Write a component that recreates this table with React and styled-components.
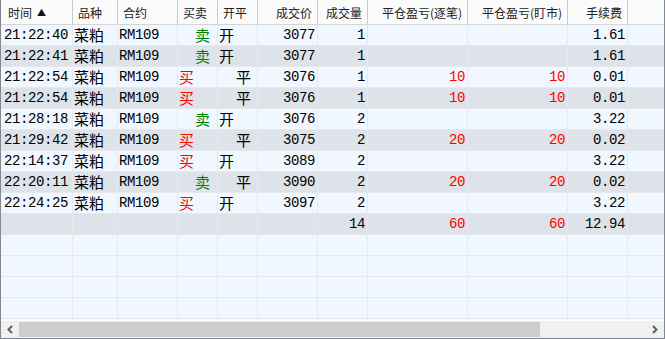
import React from "react";
import styled, { createGlobalStyle } from "styled-components";

const GlobalStyle = createGlobalStyle`
  html, body {
    margin: 0;
    padding: 0;
    background: #ffffff;
  }
`;

const columns = [
  { key: "time", title: "时间", width: 72, align: "left", sort: true },
  { key: "name", title: "品种", width: 45, align: "left" },
  { key: "code", title: "合约", width: 60, align: "left" },
  { key: "side", title: "买卖", width: 40, align: "left" },
  { key: "open", title: "开平", width: 40, align: "left" },
  { key: "price", title: "成交价", width: 60, align: "right" },
  { key: "qty", title: "成交量", width: 50, align: "right" },
  { key: "pnl", title: "平仓盈亏(逐笔)", width: 100, align: "right" },
  { key: "pnlMark", title: "平仓盈亏(盯市)", width: 100, align: "right" },
  { key: "fee", title: "手续费", width: 60, align: "right" },
];

const trades = [
  ["21:22:40", "卖", "开", "3077", "1", "", "", "1.61"],
  ["21:22:41", "卖", "开", "3077", "1", "", "", "1.61"],
  ["21:22:54", "买", "平", "3076", "1", "10", "10", "0.01"],
  ["21:22:54", "买", "平", "3076", "1", "10", "10", "0.01"],
  ["21:28:18", "卖", "开", "3076", "2", "", "", "3.22"],
  ["21:29:42", "买", "平", "3075", "2", "20", "20", "0.02"],
  ["22:14:37", "买", "开", "3089", "2", "", "", "3.22"],
  ["22:20:11", "卖", "平", "3090", "2", "20", "20", "0.02"],
  ["22:24:25", "买", "开", "3097", "2", "", "", "3.22"],
];

const Frame = styled.div`
  width: 665px;
  height: 339px;
  box-sizing: border-box;
  border: 1px solid #828790;
  border-top: none;
  display: flex;
  flex-direction: column;
  background: #f0f7ff;
  overflow: hidden;
`;

const Body = styled.div`
  flex: 1;
  display: flex;
  flex-direction: column;
`;

const HeaderRow = styled.div`
  display: flex;
  height: 25px;
  box-sizing: border-box;
  border-bottom: 1px solid #d5d5d5;
  background: #fbfbfb;
`;

const HeaderCell = styled.div`
  width: ${(p) => p.$w}px;
  flex: none;
  box-sizing: border-box;
  border-right: 1px solid #c9c9c9;
  display: flex;
  align-items: center;
  justify-content: ${(p) => (p.$align === "right" ? "flex-end" : "flex-start")};
  padding: 0 ${(p) => (p.$align === "right" ? "5px" : "0")} 0
    ${(p) => (p.$align === "right" ? "0" : p.$first ? "7px" : "5px")};
  font-family: "Noto Sans CJK SC", "Noto Sans", sans-serif;
  font-size: 12px;
  color: #222;
  white-space: nowrap;
`;

const SortMark = styled.span`
  font-size: 9px;
  margin-left: 5px;
  color: #111;
`;

const Row = styled.div`
  display: flex;
  height: 21px;
  box-sizing: border-box;
  border-bottom: 1px solid #e6e8eb;
  background: ${(p) => (p.$alt ? "#dee3ea" : "#f0f7ff")};
`;

const Cell = styled.div`
  width: ${(p) => p.$w}px;
  flex: none;
  box-sizing: border-box;
  border-right: 1px solid #e6e8eb;
  display: flex;
  align-items: center;
  justify-content: ${(p) => (p.$align === "right" ? "flex-end" : "flex-start")};
  padding-left: ${(p) => p.$indent || 0}px;
  padding-right: ${(p) => (p.$align === "right" ? 2 : 0)}px;
  font-family: "Liberation Mono", "Noto Sans CJK SC", monospace;
  font-size: 14px;
  letter-spacing: -0.4px;
  color: ${(p) => p.$color || "#000"};
  white-space: nowrap;
  overflow: hidden;
`;

const Han = styled.span`
  font-family: "Noto Sans CJK SC", sans-serif;
  font-size: 15px;
  letter-spacing: 0;
  line-height: 20px;
`;

const Filler = styled.div`
  flex: 1;
`;

const ScrollBar = styled.div`
  height: 18px;
  display: flex;
  align-items: stretch;
  background: #f0f0f0;
  border-top: 1px solid #ffffff;
  box-sizing: border-box;
`;

const ArrowButton = styled.div`
  width: 18px;
  flex: none;
  display: flex;
  align-items: center;
  justify-content: center;
`;

const Track = styled.div`
  flex: 1;
  display: flex;
  align-items: center;
`;

const Thumb = styled.div`
  width: 521px;
  height: 15px;
  background: #cdcdcd;
`;

const Chevron = ({ dir }) => (
  <svg width="8" height="9" viewBox="0 0 8 9">
    <path
      d={dir === "left" ? "M6 1 L2.5 4.5 L6 8" : "M2 1 L5.5 4.5 L2 8"}
      fill="none"
      stroke="#606060"
      strokeWidth="2"
    />
  </svg>
);

const RED = "#ff0000";
const GREEN = "#008000";

const TradeRow = ({ trade, alt }) => {
  const [time, side, open, price, qty, pnl, pnlMark, fee] = trade;
  const sell = side === "卖";
  return (
    <Row $alt={alt}>
      <Cell $w={72} $indent={3}>{time}</Cell>
      <Cell $w={45} $indent={1}><Han>菜粕</Han></Cell>
      <Cell $w={60} $indent={1}>RM109</Cell>
      <Cell $w={40} $indent={sell ? 17 : 1} $color={sell ? GREEN : RED}>
        <Han>{side}</Han>
      </Cell>
      <Cell $w={40} $indent={open === "平" ? 18 : 1}><Han>{open}</Han></Cell>
      <Cell $w={60} $align="right">{price}</Cell>
      <Cell $w={50} $align="right">{qty}</Cell>
      <Cell $w={100} $align="right" $color={RED}>{pnl}</Cell>
      <Cell $w={100} $align="right" $color={RED}>{pnlMark}</Cell>
      <Cell $w={60} $align="right">{fee}</Cell>
      <Filler />
    </Row>
  );
};

const EmptyRow = ({ alt, values = [] }) => (
  <Row $alt={alt}>
    {columns.map((c, i) => (
      <Cell key={c.key} $w={c.width} $align={c.align} $color={i === 7 || i === 8 ? RED : undefined}>
        {values[i] || ""}
      </Cell>
    ))}
    <Filler />
  </Row>
);

export default function App() {
  return (
    <>
      <GlobalStyle />
      <Frame>
        <Body>
          <HeaderRow>
            {columns.map((c, i) => (
              <HeaderCell key={c.key} $w={c.width} $align={c.align} $first={i === 0}>
                {c.title}
                {c.sort && <SortMark>▲</SortMark>}
              </HeaderCell>
            ))}
            <Filler />
          </HeaderRow>
          {trades.map((t, i) => (
            <TradeRow key={i} trade={t} alt={i % 2 === 1} />
          ))}
          <EmptyRow alt values={["", "", "", "", "", "", "14", "60", "60", "12.94"]} />
          <EmptyRow />
          <EmptyRow />
          <EmptyRow />
          <EmptyRow />
        </Body>
        <ScrollBar>
          <ArrowButton><Chevron dir="left" /></ArrowButton>
          <Track><Thumb /></Track>
          <ArrowButton><Chevron dir="right" /></ArrowButton>
        </ScrollBar>
      </Frame>
    </>
  );
}
